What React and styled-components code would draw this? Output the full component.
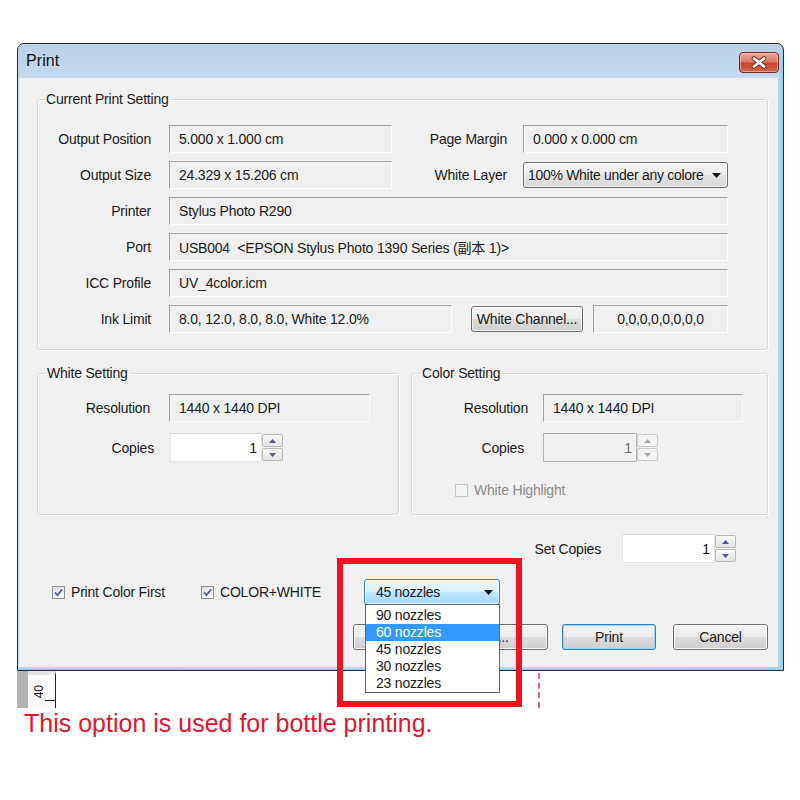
import React from 'react';
import styled, { createGlobalStyle, css } from 'styled-components';

const GlobalStyle = createGlobalStyle`
  html, body {
    margin: 0;
    padding: 0;
    background: #fff;
  }
  body {
    font-family: "Liberation Sans", Arial, "Noto Sans CJK SC", sans-serif;
    font-size: 14px;
    color: #1b1b1b;
  }
`;

const winGradient = css`
  background: linear-gradient(#f3f3f3 0%, #ebebeb 48%, #dcdcdc 52%, #cfcfcf 100%);
`;

const Arrow = () => (
  <svg width="9" height="5" viewBox="0 0 9 5">
    <polygon points="0,0 9,0 4.5,5" fill="#111" />
  </svg>
);

const CheckMark = () => (
  <svg width="11" height="11" viewBox="0 0 11 11">
    <path d="M2 5.5 L4.5 8.2 L9 2.5" fill="none" stroke="#4a5c98" strokeWidth="1.8" />
  </svg>
);

const SpinArrow = ({ up, disabled }) => (
  <svg width="7" height="4" viewBox="0 0 7 4">
    <polygon
      points={up ? '0,4 7,4 3.5,0' : '0,0 7,0 3.5,4'}
      fill={disabled ? '#a9a9a9' : '#4d5896'}
    />
  </svg>
);

const Spin = ({ value, width, disabled }) => (
  <SpinBox>
    <SpinInput $w={width} $disabled={disabled}>{value}</SpinInput>
    <SpinButtons>
      <SpinBtn $disabled={disabled}><SpinArrow up disabled={disabled} /></SpinBtn>
      <SpinBtn $disabled={disabled}><SpinArrow disabled={disabled} /></SpinBtn>
    </SpinButtons>
  </SpinBox>
);

const Check = ({ checked, disabled, children, width }) => (
  <CheckItem $w={width} $disabled={disabled}>
    <CheckBox $disabled={disabled}>{checked && <CheckMark />}</CheckBox>
    {children}
  </CheckItem>
);

const nozzles = ['90 nozzles', '60 nozzles', '45 nozzles', '30 nozzles', '23 nozzles'];

const App = () => {
  return (
    <Root>
      <GlobalStyle />
      <Window>
        <TitleBar>
          <Title>Print</Title>
          <CloseBtn>
            <svg width="18" height="13" viewBox="0 0 18 13">
              <path d="M4 2.5 L14 10.5 M14 2.5 L4 10.5" stroke="#6b2a22" strokeWidth="4.6" strokeLinecap="round" />
              <path d="M4 2.5 L14 10.5 M14 2.5 L4 10.5" stroke="#fff" strokeWidth="2.8" strokeLinecap="round" />
            </svg>
          </CloseBtn>
        </TitleBar>
        <Client>
          <Group>
            <Legend $ml={6}>Current Print Setting</Legend>
            <GroupBody $pad="18px 0 16px 0" $gap={8}>
              <Row>
                <Label $w={113} $mr={18}>Output Position</Label>
                <Field $w={223}>5.000 x 1.000 cm</Field>
                <Label $w={115} $mr={16}>Page Margin</Label>
                <Field $w={205}>0.000 x 0.000 cm</Field>
              </Row>
              <Row>
                <Label $w={113} $mr={18}>Output Size</Label>
                <Field $w={223}>24.329 x 15.206 cm</Field>
                <Label $w={115} $mr={16}>White Layer</Label>
                <Combo $w={205}>
                  <ComboText>100% White under any colore</ComboText>
                  <ArrowBox><Arrow /></ArrowBox>
                </Combo>
              </Row>
              <Row>
                <Label $w={113} $mr={18}>Printer</Label>
                <Field $w={559}>Stylus Photo R290</Field>
              </Row>
              <Row>
                <Label $w={113} $mr={18}>Port</Label>
                <Field $w={559}>USB004&nbsp; &lt;EPSON Stylus Photo 1390 Series (副本 1)&gt;</Field>
              </Row>
              <Row>
                <Label $w={113} $mr={18}>ICC Profile</Label>
                <Field $w={559}>UV_4color.icm</Field>
              </Row>
              <Row>
                <Label $w={113} $mr={18}>Ink Limit</Label>
                <Field $w={283}>8.0, 12.0, 8.0, 8.0, White 12.0%</Field>
                <Button $w={112} $ml={19}>White Channel...</Button>
                <Field $w={135} $ml={10} $center>0,0,0,0,0,0,0,0</Field>
              </Row>
            </GroupBody>
          </Group>

          <GroupRow>
            <Group $w={362} $h={150}>
              <Legend $ml={7}>White Setting</Legend>
              <GroupBody $pad="13px 0 0 0" $gap={11}>
                <Row>
                  <Label $w={112} $mr={19}>Resolution</Label>
                  <Field $w={201}>1440 x 1440 DPI</Field>
                </Row>
                <Row $h={29}>
                  <Label $w={116} $mr={16}>Copies</Label>
                  <Spin value="1" width={92} />
                </Row>
              </GroupBody>
            </Group>
            <Group $w={357} $h={150}>
              <Legend $ml={8}>Color Setting</Legend>
              <GroupBody $pad="13px 0 0 0" $gap={11}>
                <Row>
                  <Label $w={116} $mr={15}>Resolution</Label>
                  <Field $w={200}>1440 x 1440 DPI</Field>
                </Row>
                <Row $h={29}>
                  <Label $w={112} $mr={19}>Copies</Label>
                  <Spin value="1" width={94} disabled />
                </Row>
                <Row $h={18} $pl={43} $mt={8}>
                  <Check disabled>White Highlight</Check>
                </Row>
              </GroupBody>
            </Group>
          </GroupRow>

          <SetCopiesRow>
            <Label $mr={21}>Set Copies</Label>
            <Spin value="1" width={93} />
          </SetCopiesRow>

          <OptionsRow>
            <Check checked width={149}>Print Color First</Check>
            <Check checked width={163}>COLOR+WHITE</Check>
            <ComboWrap>
              <Combo $w={136} $active>
                <ComboText $pl={11}>45 nozzles</ComboText>
                <ArrowBox><Arrow /></ArrowBox>
              </Combo>
              <DropList>
                {nozzles.map(n => (
                  <DropItem key={n} $selected={n === '60 nozzles'}>{n}</DropItem>
                ))}
              </DropList>
            </ComboWrap>
          </OptionsRow>

          <ButtonRow>
            <Button $w={195}>Printer Properties...</Button>
            <Button $w={94} $ml={14} $focused>Print</Button>
            <Button $w={95} $ml={17}>Cancel</Button>
          </ButtonRow>
        </Client>
      </Window>

      <Canvas>
        <CanvasEdge />
        <Ruler>
          <RulerText>40</RulerText>
          <RulerTick />
        </Ruler>
        <GuideLine />
      </Canvas>
      <Note>This option is used for bottle printing.</Note>
      <Highlight />
    </Root>
  );
};

const Root = styled.div`
  position: relative;
  width: 800px;
  height: 800px;
  overflow: hidden;
  padding-top: 43px;
  box-sizing: border-box;
`;

const Window = styled.div`
  margin-left: 17px;
  width: 767px;
  box-sizing: border-box;
  border: 1px solid #2b2b2b;
  border-radius: 7px 7px 0 0;
  background: linear-gradient(90deg, #bcd3ea, #c4d9ee 50%, #b2cfea);
  padding: 0 5px 3px 1px;
  box-shadow: inset -1px -1px 0 #7fd0ef;
`;

const TitleBar = styled.div`
  height: 34px;
  display: flex;
  align-items: center;
  justify-content: space-between;
  padding: 0 0 0 7px;
  margin-right: -1px;
  background: linear-gradient(#b9d0e8, #c7daee);
  border-radius: 6px 6px 0 0;
`;

const Title = styled.div`
  font-size: 16px;
  color: #111;
  letter-spacing: 0.1px;
`;

const CloseBtn = styled.div`
  width: 40px;
  height: 21px;
  box-sizing: border-box;
  margin-top: 2px;
  border: 1px solid #6f2b22;
  border-radius: 4px;
  background: linear-gradient(#e9a897 0%, #dc7a62 45%, #c8442b 55%, #d5694e 100%);
  box-shadow: inset 0 0 0 1px rgba(255, 220, 210, 0.5);
  display: flex;
  align-items: center;
  justify-content: center;
`;

const Client = styled.div`
  background: #f0f0f0;
  padding: 13px 10px 17px 18px;
`;

const Group = styled.fieldset`
  margin: 0;
  padding: 0;
  min-width: 0;
  border: 1px solid #d5d9dc;
  border-radius: 3px;
  box-shadow: inset 1px 1px 0 #fff, 1px 1px 0 #fff;
  box-sizing: border-box;
  ${p => p.$w && `width: ${p.$w}px;`}
  ${p => p.$h && `height: ${p.$h}px;`}
`;

const Legend = styled.legend`
  margin-left: ${p => p.$ml}px;
  padding: 0 2px;
  line-height: 16px;
  font-size: 14px;
  letter-spacing: -0.2px;
  color: #1b1b1b;
`;

const GroupBody = styled.div`
  display: flex;
  flex-direction: column;
  gap: ${p => p.$gap}px;
  padding: ${p => p.$pad};
`;

const GroupRow = styled.div`
  display: flex;
  justify-content: space-between;
  margin-top: 15px;
`;

const Row = styled.div`
  display: flex;
  align-items: center;
  height: ${p => p.$h || 28}px;
  ${p => p.$pl && `padding-left: ${p.$pl}px;`}
  ${p => p.$mt && `margin-top: ${p.$mt}px;`}
`;

const Label = styled.div`
  ${p => p.$w && `width: ${p.$w}px;`}
  flex-shrink: 0;
  text-align: right;
  margin-right: ${p => p.$mr || 0}px;
  white-space: nowrap;
  letter-spacing: -0.2px;
`;

const Field = styled.div`
  width: ${p => p.$w}px;
  height: 28px;
  box-sizing: border-box;
  flex-shrink: 0;
  margin-left: ${p => p.$ml || 0}px;
  border: 1px solid;
  border-color: #a3a3a3 #fdfdfd #fdfdfd #a3a3a3;
  background: #efefef;
  display: flex;
  align-items: center;
  justify-content: ${p => (p.$center ? 'center' : 'flex-start')};
  padding-left: ${p => (p.$center ? 0 : 9)}px;
  white-space: nowrap;
  overflow: hidden;
  letter-spacing: -0.2px;
`;

const Combo = styled.div`
  width: ${p => p.$w}px;
  height: 26px;
  box-sizing: border-box;
  flex-shrink: 0;
  display: flex;
  align-items: center;
  border: 1px solid ${p => (p.$active ? '#3c7fb1' : '#707070')};
  border-radius: 3px;
  ${p =>
    p.$active
      ? `background: linear-gradient(#eaf6fd 0%, #d9f0fc 48%, #bee6fd 52%, #a7d9f5 100%);`
      : `background: linear-gradient(#f5f5f5 0%, #ececec 48%, #e2e2e2 52%, #d8d8d8 100%);`}
  box-shadow: inset 0 0 0 1px rgba(255, 255, 255, 0.6);
`;

const ComboText = styled.div`
  flex: 1;
  min-width: 0;
  overflow: hidden;
  white-space: nowrap;
  padding-left: ${p => p.$pl || 4}px;
  letter-spacing: -0.3px;
`;

const ArrowBox = styled.div`
  width: 22px;
  flex-shrink: 0;
  display: flex;
  align-items: center;
  justify-content: center;
  padding-top: 1px;
`;

const Button = styled.div`
  width: ${p => p.$w}px;
  height: 26px;
  box-sizing: border-box;
  flex-shrink: 0;
  margin-left: ${p => p.$ml || 0}px;
  display: flex;
  align-items: center;
  justify-content: center;
  white-space: nowrap;
  border-radius: 3px;
  border: 1px solid ${p => (p.$focused ? '#3c7fb1' : '#707070')};
  ${winGradient}
  box-shadow: inset 0 0 0 1px ${p => (p.$focused ? '#8fd8f5' : 'rgba(255,255,255,0.7)')};
  letter-spacing: -0.2px;
`;

const SpinBox = styled.div`
  display: flex;
  height: 29px;
`;

const SpinInput = styled.div`
  width: ${p => p.$w}px;
  box-sizing: border-box;
  border: 1px solid ${p => (p.$disabled ? '#b3b6b9' : '#e6e6e6')};
  border-top-color: ${p => (p.$disabled ? '#adb2b5' : '#d5d5d5')};
  background: ${p => (p.$disabled ? '#f0f0f0' : '#fff')};
  color: ${p => (p.$disabled ? '#6d6d6d' : '#111')};
  display: flex;
  align-items: center;
  justify-content: flex-end;
  padding-right: 4px;
`;

const SpinButtons = styled.div`
  width: 21px;
  display: flex;
  flex-direction: column;
  gap: 1px;
  padding: 1px 0;
  box-sizing: border-box;
`;

const SpinBtn = styled.div`
  flex: 1;
  box-sizing: border-box;
  border: 1px solid ${p => (p.$disabled ? '#c9c9c9' : '#b9b9b9')};
  border-radius: 2px;
  background: ${p =>
    p.$disabled ? '#f2f2f2' : 'linear-gradient(#f8f8f8, #e3e3e3)'};
  display: flex;
  align-items: center;
  justify-content: center;
`;

const CheckItem = styled.div`
  display: flex;
  align-items: center;
  gap: 6px;
  ${p => p.$w && `width: ${p.$w}px;`}
  flex-shrink: 0;
  letter-spacing: -0.2px;
  color: ${p => (p.$disabled ? '#8d8d8d' : '#1b1b1b')};
`;

const CheckBox = styled.div`
  width: 13px;
  height: 13px;
  box-sizing: border-box;
  border: 1px solid ${p => (p.$disabled ? '#c6c6c6' : '#8e8f8f')};
  background: ${p =>
    p.$disabled ? '#f4f4f4' : 'linear-gradient(135deg, #dcdcdc, #fdfdfd)'};
  display: flex;
  align-items: center;
  justify-content: center;
`;

const SetCopiesRow = styled.div`
  display: flex;
  align-items: center;
  justify-content: flex-end;
  margin-top: 19px;
  padding-right: 32px;
`;

const OptionsRow = styled.div`
  display: flex;
  align-items: center;
  height: 26px;
  margin-top: 16px;
  padding-left: 15px;
`;

const ComboWrap = styled.div`
  position: relative;
  z-index: 2;
`;

const DropList = styled.div`
  position: absolute;
  top: 25px;
  left: 1px;
  width: 135px;
  box-sizing: border-box;
  border: 1px solid #646464;
  background: #fff;
  padding-top: 2px;
`;

const DropItem = styled.div`
  height: 17px;
  line-height: 17px;
  padding-left: 10px;
  letter-spacing: -0.2px;
  ${p => p.$selected && `background: #3399ff; color: #fff;`}
`;

const ButtonRow = styled.div`
  display: flex;
  justify-content: flex-end;
  margin-top: 19px;
`;

const Canvas = styled.div`
  display: flex;
  height: 37px;
  margin-left: 17px;
`;

const CanvasEdge = styled.div`
  width: 11px;
  background: #b3b3b3;
`;

const Ruler = styled.div`
  position: relative;
  width: 28px;
  box-sizing: border-box;
  background: #fafafa;
  border-right: 1px solid #222;
  border-top: 4px solid #e6e6e6;
`;

const RulerText = styled.div`
  writing-mode: vertical-rl;
  transform: rotate(180deg);
  font-size: 12px;
  color: #111;
  margin: 10px 0 0 4px;
`;

const RulerTick = styled.div`
  position: absolute;
  right: 0;
  top: 25px;
  width: 10px;
  height: 1px;
  background: #222;
`;

const GuideLine = styled.div`
  margin-left: 482px;
  margin-top: 2px;
  width: 0;
  border-left: 2px dashed #ea5a8c;
`;

const Note = styled.div`
  margin: 0 0 0 24px;
  font-size: 25px;
  line-height: 30px;
  color: #e6142b;
`;

const Highlight = styled.div`
  position: absolute;
  left: 337px;
  top: 558px;
  width: 185px;
  height: 149px;
  box-sizing: border-box;
  border: 6px solid #ec1420;
  z-index: 3;
  pointer-events: none;
`;

export default App;
